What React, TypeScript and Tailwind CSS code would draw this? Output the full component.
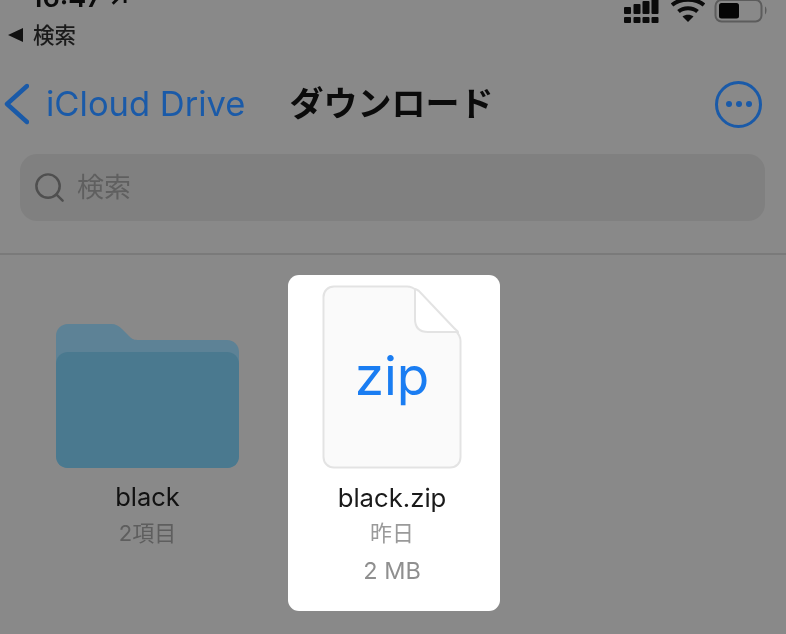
import { Search } from "lucide-react";

const font = "font-['Inter','Noto_Sans_CJK_JP',sans-serif]";

const StatusIcons = () => (
  <div className="flex items-start gap-[12px] pr-[18px]">
    {/* signal */}
    <svg width="36" height="24" viewBox="0 0 36 24" fill="#0b0b0b">
      <rect x="1" y="7" width="7" height="7" rx="1" />
      <rect x="1" y="17" width="7" height="6" rx="1" />
      <rect x="10.5" y="4" width="7" height="10" rx="1" />
      <rect x="10.5" y="17" width="7" height="6" rx="1" />
      <rect x="19.5" y="1" width="7" height="13" rx="1" />
      <rect x="19.5" y="17" width="7" height="6" rx="1" />
      <rect x="28.5" y="-4" width="7" height="18" rx="1" />
      <rect x="28.5" y="17" width="7" height="6" rx="1" />
    </svg>
    {/* wifi */}
    <svg width="34" height="24" viewBox="0 0 34 24" fill="none" stroke="#0b0b0b" strokeWidth="4">
      <path d="M1 5 C9 -2 25 -2 33 5" />
      <path d="M7.5 11.5 C12.5 7 21.5 7 26.5 11.5" />
      <path d="M17 22 L11.5 16.5 C14.5 14.2 19.5 14.2 22.5 16.5 Z" fill="#0b0b0b" stroke="none" />
    </svg>
    {/* battery */}
    <svg width="54" height="24" viewBox="0 0 54 24" fill="none" className="-ml-[3px]">
      <rect x="1.5" y="0" width="46" height="21.5" rx="6" stroke="#5c5c5c" strokeWidth="2" />
      <rect x="5" y="3" width="20" height="15.5" rx="2.5" fill="#050505" />
      <path d="M51 6.5 C53 7.5 53 13 51 14.5 Z" fill="#5c5c5c" />
    </svg>
  </div>
);

const FileIcon = () => (
  <div className="relative h-[184px] w-[140px]">
    <svg width="140" height="184" viewBox="0 0 140 184">
      <path
        d="M12 1.5 H85 C89 1.5 92 3 95 6 L133 45 C137 49 138.5 52 138.5 56 V172 C138.5 178 134.5 182.5 128 182.5 H12 C6 182.5 1.5 178 1.5 172 V12 C1.5 6 6 1.5 12 1.5 Z"
        fill="#fafafa"
        stroke="#e3e3e3"
        strokeWidth="2"
      />
      <path
        d="M93 4 V34 C93 43 97 47 106 47 H136 C136 46 134 45 132 43 L97 6 C95 5 94 4 93 4 Z"
        fill="#ffffff"
        stroke="#e3e3e3"
        strokeWidth="2"
      />
    </svg>
    <span className={`absolute inset-x-0 top-[51px] text-center text-[53px] leading-[80px] text-[#1a7df2] ${font}`}>
      zip
    </span>
  </div>
);

export default function App() {
  return (
    <div className={`flex h-[634px] w-[786px] flex-col overflow-hidden bg-[#898989] blur-[0.4px] ${font}`}>
      <div className="flex h-[24px] items-start justify-between">
        <span className="-mt-[17px] pl-[31px] text-[27px] font-semibold leading-[30px] text-[#0b0b0b]">16:47 ↗</span>
        <StatusIcons />
      </div>

      <div className="flex h-[22px] items-center gap-[10px] pl-[8px] text-[21.5px] leading-[22px] text-[#1a1a1a]">
        <span className="h-0 w-0 border-y-[7px] border-r-[15px] border-y-transparent border-r-[#111111]" />
        <span className="font-medium">検索</span>
      </div>

      <div className="mt-[25px] flex h-[66px] items-center justify-between pr-[24px]">
        <div className="flex items-center">
          <svg width="26" height="44" viewBox="0 0 26 44" fill="none" className="ml-[3px]">
            <path d="M24 4 L4 22 L24 40" stroke="#1a5aa8" strokeWidth="4.4" strokeLinecap="round" strokeLinejoin="round" />
          </svg>
          <span className="ml-[17px] text-[34.5px] leading-[40px] text-[#1a5aa8]">iCloud Drive</span>
          <span className="ml-[44px] text-[34px] font-semibold leading-[40px] text-[#0b0b0b]">ダウンロード</span>
        </div>
        <div className="flex h-[47px] w-[47px] items-center justify-center gap-[4px] rounded-full border-[3px] border-[#1a5aa8]">
          <span className="h-[6px] w-[6px] rounded-full bg-[#1a5aa8]" />
          <span className="h-[6px] w-[6px] rounded-full bg-[#1a5aa8]" />
          <span className="h-[6px] w-[6px] rounded-full bg-[#1a5aa8]" />
        </div>
      </div>

      <div className="mx-[20px] mt-[17px] flex h-[67px] w-[745px] items-center rounded-[17px] bg-[#808080] pl-[12px]">
        <Search size={35} strokeWidth={1.7} className="text-[#4f4f4f]" />
        <span className="ml-[10px] text-[27px] leading-[32px] text-[#5f5f5f]">検索</span>
      </div>

      <div className="mt-[32px] h-[2px] bg-[#7a7a7a]" />

      <div className="flex items-start pl-[56px] pt-[20px]">
        <div className="mt-[49px] flex w-[183px] flex-col items-center">
          <svg width="183" height="144" viewBox="0 0 183 144">
            <path
              d="M12 0 H55 C60 0 63 2 66 5 L74 13 C77 16 80 16 84 16 H171 C178 16 183 21 183 28 V132 C183 139 178 144 171 144 H12 C5 144 0 139 0 132 V12 C0 5 5 0 12 0 Z"
              fill="#5d8296"
            />
            <path
              d="M12 28 H171 C178 28 183 33 183 40 V132 C183 139 178 144 171 144 H12 C5 144 0 139 0 132 V40 C0 33 5 28 12 28 Z"
              fill="#4a798f"
            />
          </svg>
          <span className="mt-[14px] text-[25.5px] leading-[30px] text-[#111111]">black</span>
          <span className="mt-[8px] text-[22px] leading-[26px] text-[#5e5e5e]">2項目</span>
        </div>

        <div className="ml-[49px] flex h-[336px] w-[212px] flex-col items-center rounded-[11px] bg-white pr-[4px] pt-[10px]">
          <FileIcon />
          <span className="mt-[14px] text-[25.7px] leading-[30px] text-[#1a1a1a]">black.zip</span>
          <span className="mt-[7px] text-[22px] leading-[26px] text-[#9a9a9a]">昨日</span>
          <span className="mt-[12px] text-[23.5px] leading-[26px] text-[#8f8f8f]">2 MB</span>
        </div>
      </div>
    </div>
  );
}
